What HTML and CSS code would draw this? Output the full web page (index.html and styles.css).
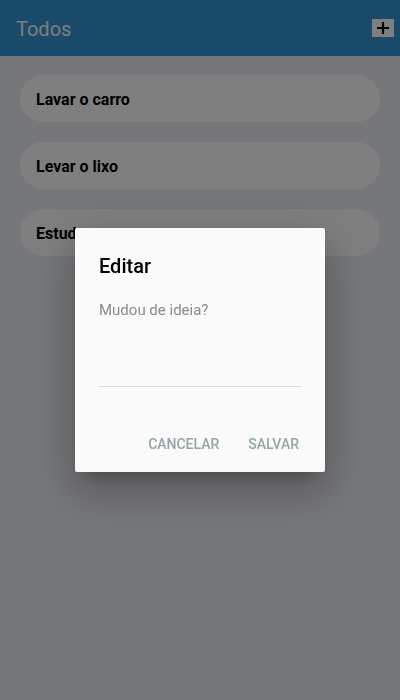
FILE: index.html
```html
<!DOCTYPE html>
<html lang="pt">
<head>
<meta charset="utf-8">
<title>Todos</title>
<link rel="stylesheet" href="styles.css">
</head>
<body>
<div class="app">
  <header class="appbar">
    <h1 class="title">Todos</h1>
    <button class="add" aria-label="Adicionar">
      <svg width="14" height="14" viewBox="0 0 14 14"><path d="M7 1v12M1 7h12" stroke="#000" stroke-width="2.2"/></svg>
    </button>
  </header>
  <main class="list">
    <div class="item">Lavar o carro</div>
    <div class="item">Levar o lixo</div>
    <div class="item">Estudar</div>
  </main>
</div>
<div class="scrim">
  <div class="dialog">
    <h2 class="dialog-title">Editar</h2>
    <div class="field">
      <span class="placeholder">Mudou de ideia?</span>
    </div>
    <div class="actions">
      <button class="btn">CANCELAR</button>
      <button class="btn">SALVAR</button>
    </div>
  </div>
</div>
</body>
</html>
```
FILE: styles.css
```css
* { box-sizing: border-box; }
html, body { margin: 0; padding: 0; height: 100%; }
body {
  font-family: Roboto, "Noto Sans", sans-serif;
  background: #eceef4;
  width: 400px;
  height: 700px;
  overflow: hidden;
}
.app { height: 100%; }
.appbar {
  height: 56px;
  background: #3696d6;
  display: flex;
  align-items: center;
  justify-content: space-between;
  padding: 2px 6px 0 16px;
}
.title {
  margin: 0;
  font-size: 20px;
  font-weight: 400;
  color: #fafafa;
}
.add {
  width: 22px;
  height: 18px;
  margin-top: -2px;
  background: #fefefe;
  border: none;
  padding: 0;
  display: flex;
  align-items: center;
  justify-content: center;
}
.list {
  padding: 19px 20px;
  display: flex;
  flex-direction: column;
  gap: 20px;
}
.item {
  height: 47px;
  background: #ffffff;
  border-radius: 24px;
  padding: 2px 16px 0;
  display: flex;
  align-items: center;
  font-size: 16px;
  font-weight: 700;
  color: #000;
}
.scrim {
  position: fixed;
  inset: 0;
  background: rgba(0, 0, 0, 0.5);
  display: flex;
  align-items: center;
  justify-content: center;
}
.dialog {
  width: 250px;
  height: 244px;
  background: #fafafa;
  border-radius: 2px;
  box-shadow: 0 11px 15px -7px rgba(0,0,0,0.2), 0 24px 38px 3px rgba(0,0,0,0.14), 0 9px 46px 8px rgba(0,0,0,0.12);
  padding: 24px 24px 8px 24px;
  display: flex;
  flex-direction: column;
}
.dialog-title {
  margin: 0;
  font-size: 20px;
  font-weight: 500;
  line-height: 28px;
  color: #000;
}
.field {
  margin-top: 20px;
  height: 87px;
  border-bottom: 1px solid #d9d9d9;
}
.placeholder {
  font-size: 15px;
  color: #8a8a8a;
  line-height: 20px;
}
.actions {
  margin-top: auto;
  display: flex;
  justify-content: flex-end;
  gap: 29px;
  padding: 0 2px 12px 0;
}
.btn {
  background: none;
  border: none;
  padding: 0;
  font-family: Roboto, "Noto Sans", sans-serif;
  font-size: 14px;
  font-weight: 500;
  color: #95a5a6;
  letter-spacing: 0;
}
```
